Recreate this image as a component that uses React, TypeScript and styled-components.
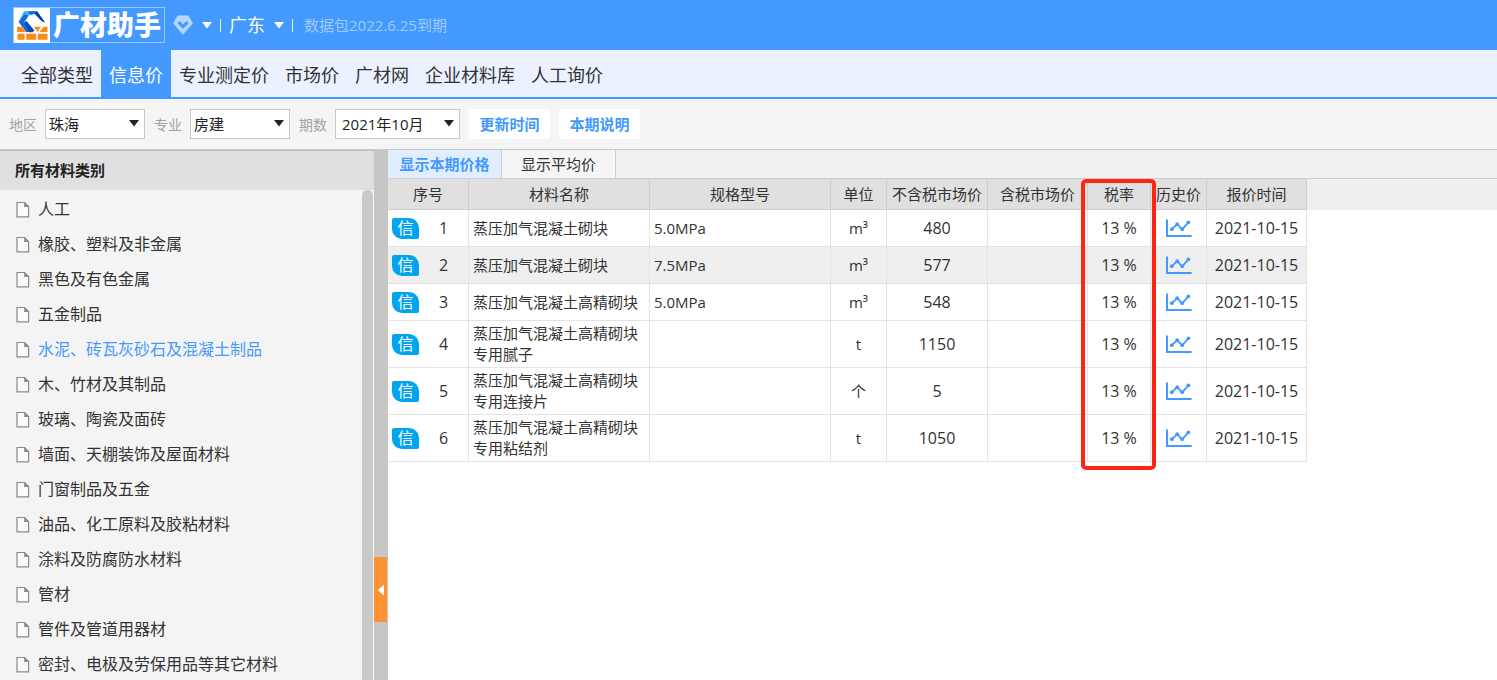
import React, { useState } from "react";
import styled, { createGlobalStyle, css } from "styled-components";

const GlobalStyle = createGlobalStyle`
  *, *::before, *::after { box-sizing: border-box; }
  body {
    margin: 0;
    background: #fff;
    color: #333;
    font-family: "Open Sans", "Noto Sans CJK SC", sans-serif;
    font-size: 15px;
    line-height: 21px;
  }
  button, select { font: inherit; color: inherit; }
`;

const Page = styled.div`
  display: flex;
  flex-direction: column;
  height: 100vh;
  overflow: hidden;
`;

const TopBar = styled.header`
  display: flex;
  align-items: center;
  flex: none;
  height: 50px;
  padding: 0 13px;
  background: #4499ff;
  color: #fff;
`;

const Brand = styled.a`
  display: flex;
  align-items: center;
  height: 36px;
  padding-right: 3px;
  border: 1px solid #9bc9ff;
  color: #fff;
  font-size: 27px;
  font-weight: 900;
  line-height: 34px;
  text-decoration: none;
`;

const BrandMark = styled.svg`
  width: 36px;
  height: 35px;
  margin-right: 3px;
  background: #fff;
`;

const BarButton = styled.button`
  display: flex;
  align-items: center;
  gap: 9px;
  margin: 0;
  padding: 0 8px;
  border: 0;
  background: none;
  color: #fff;
  font-size: 18px;
  line-height: 24px;
`;

const Divider = styled.span`
  width: 1px;
  height: 13px;
  background: #e4f0ff;
`;

const Expiry = styled.span`
  margin-left: 11px;
  color: #9fcbff;
`;

const CategoryNav = styled.nav`
  display: flex;
  flex: none;
  height: 49px;
  padding-left: 13px;
  border-bottom: 2px solid #4499ff;
  background: #ebf1ff;
`;

const CategoryLink = styled.a<{ $active?: boolean }>`
  padding: 0 8px;
  color: ${(p) => (p.$active ? "#fff" : "#333")};
  background: ${(p) => (p.$active ? "#4499ff" : "transparent")};
  font-size: 18px;
  line-height: 51px;
  text-decoration: none;
  white-space: nowrap;
`;

const FilterBar = styled.div`
  display: flex;
  align-items: center;
  flex: none;
  gap: 9px;
  height: 51px;
  padding-left: 9px;
  border-bottom: 1px solid #c8c8c8;
  background: #f5f5f5;
`;

const Field = styled.label`
  display: flex;
  align-items: center;
  gap: 8px;
  color: #a3a3a3;
  font-size: 14px;
`;

const SelectBox = styled.span<{ $wide?: boolean }>`
  position: relative;
  width: ${(p) => (p.$wide ? 125 : 100)}px;
  height: 30px;

  select {
    width: 100%;
    height: 100%;
    padding: 0 ${(p) => (p.$wide ? 6 : 3)}px;
    border: 1px solid #c8c8c8;
    border-radius: 0;
    appearance: none;
    background: #fff;
    color: #222;
    font-size: 15px;
  }

  svg {
    position: absolute;
    top: 11px;
    right: 6px;
    pointer-events: none;
  }
`;

const FilterButton = styled.button`
  width: 81px;
  height: 30px;
  padding: 0;
  border: 0;
  background: #fff;
  color: #4499ff;
  font-weight: 700;
`;

const Main = styled.main`
  display: flex;
  flex: 1;
  min-height: 0;
`;

const Sidebar = styled.aside`
  display: flex;
  flex-direction: column;
  flex: none;
  width: 374px;
  background: #f4f4f4;
`;

const SidebarTitle = styled.h2`
  flex: none;
  height: 40px;
  margin: 0;
  padding-left: 15px;
  border-top: 1px solid #c0c0c0;
  background: #e0e0e0;
  color: #222;
  font-size: 15px;
  font-weight: 700;
  line-height: 39px;
`;

const SidebarBody = styled.div`
  display: flex;
  flex: 1;
  min-height: 0;
`;

const CategoryList = styled.ul`
  flex: 1;
  margin: 0;
  padding: 2px 0 0;
  overflow: hidden;
  list-style: none;
`;

const CategoryItem = styled.a<{ $active?: boolean }>`
  display: flex;
  align-items: center;
  gap: 8px;
  height: 35px;
  padding-left: 16px;
  color: ${(p) => (p.$active ? "#4499ff" : "#333")};
  font-size: 16px;
  text-decoration: none;
`;

const ScrollThumb = styled.div`
  width: 11px;
  margin-right: 1px;
  border-radius: 6px 6px 0 0;
  background: #c9c9c9;
`;

const Splitter = styled.div`
  display: flex;
  flex-direction: column;
  justify-content: flex-end;
  flex: none;
  width: 14px;
  padding: 0 1px 58px 0;
  background: #c8c6c4;
`;

const CollapseButton = styled.button`
  display: flex;
  align-items: center;
  justify-content: center;
  height: 65px;
  padding: 0;
  border: 0;
  background: #ff9233;
`;

const Content = styled.section`
  flex: 1;
  min-width: 0;
  background: #fff;
`;

const PriceTabs = styled.div`
  display: flex;
  height: 29px;
  border-bottom: 1px solid #cfcfcf;
  background: #f1f1f1;
`;

const PriceTab = styled.button<{ $active?: boolean }>`
  width: 114px;
  padding: 0;
  border: 0;
  border-right: 1px solid #cfcfcf;
  background: #f5f5f5;
  ${(p) =>
    p.$active &&
    css`
      background: #e1eeff;
      color: #4499ff;
      font-weight: 700;
    `}
`;

const TableArea = styled.div`
  position: relative;
  background: linear-gradient(#efefef, #efefef) 0 0 / 100% 31px no-repeat;
`;

const PriceTable = styled.table`
  width: 919px;
  border-spacing: 0;
  table-layout: fixed;

  th {
    height: 31px;
    padding: 0;
    border-right: 1px solid #cdcdcd;
    border-bottom: 1px solid #cdcdcd;
    background: #e0e0e0;
    font-weight: 400;
    white-space: nowrap;
  }
`;

const Row = styled.tr<{ $highlighted?: boolean }>`
  height: 37px;
  background: ${(p) => (p.$highlighted ? "#efefef" : "#fff")};
`;

const Cell = styled.td<{ $text?: boolean }>`
  padding: 2px 4px;
  border-right: 1px solid #e3e3e3;
  border-bottom: 1px solid #e3e3e3;
  font-size: ${(p) => (p.$text ? 15 : 16)}px;
  text-align: ${(p) => (p.$text ? "left" : "center")};
  line-height: 21px;
`;

const UnitCell = styled(Cell)`
  font-size: 15px;
`;

const IndexCell = styled(Cell)`
  padding-right: 0;
`;

const IndexLine = styled.div`
  display: flex;
  align-items: center;

  span:last-child { flex: 1; }
`;

const SourceBadge = styled.span`
  width: 27px;
  height: 21px;
  border-radius: 2px 10px 2px 10px;
  background: #00a4ef;
  color: #fff;
  font-size: 16px;
  line-height: 20px;
  text-align: center;
`;

const TrendButton = styled.button`
  display: block;
  margin: 0 auto;
  padding: 0;
  border: 0;
  background: none;

  svg { display: block; }
`;

const TaxOutline = styled.div`
  position: absolute;
  top: 0;
  left: 693px;
  width: 75px;
  height: 291px;
  border: 4px solid #ff2414;
  border-radius: 5px;
  pointer-events: none;
`;

const DownArrow = ({ color = "#fff" }: { color?: string }) => (
  <svg width="10" height="7" viewBox="0 0 10 7" aria-hidden="true">
    <path d="M0 0H10L5 6.6Z" fill={color} />
  </svg>
);

const GemIcon = () => (
  <svg width="20" height="20" viewBox="0 0 20 20" aria-hidden="true">
    <path d="M4.5 0.5H15.5L19.8 8.2L10 19.8L0.2 8.2Z" fill="#b4d7ff" />
    <path d="M5.4 7.2L10 11.6L14.6 7.2" fill="none" stroke="#4499ff" strokeWidth="3" />
  </svg>
);

const LogoMark = () => (
  <BrandMark viewBox="0 0 36 35" aria-hidden="true">
    <path d="M10 3.2H22.5L19 6.5H15.5L9.5 15L4.6 14Z" fill="#27b5f5" />
    <path d="M4.6 14L10.5 6.5L14.5 7.5L10 14.2L18.5 24H12.2Z" fill="#1769d8" />
    <path d="M10 14.2L12.5 13L20.5 22.5L18.5 24.3H15Z" fill="#0f4fb5" />
    <path d="M14 3.2H23L31 14.6L27 12.6L20.6 5.8L16 7Z" fill="#1769d8" />
    <path d="M23 3.2L31 14.6L28 13.2L20.8 5.4Z" fill="#0b3e98" />
    <path d="M3 18.8H7.6L12 24H3Z M19.8 18.8H27L23.4 24Z M29.4 18.8H33.5V24H25.6Z" fill="#ff8a16" />
    <path d="M3.5 25.8H10.5V31.8H3.5Z M12.2 25.8H22V31.8H12.2Z M23.8 25.8H33.5V31.8H23.8Z" fill="#ff8a16" />
  </BrandMark>
);

const FileIcon = () => (
  <svg width="14" height="17" viewBox="0 0 14 17" aria-hidden="true">
    <path d="M1 1.5H8.6L12.6 5.5V15.8H1Z" fill="#fafafa" stroke="#8a8a8a" strokeWidth="1.2" />
    <path d="M8.2 1.2V5.9H12.9Z" fill="#8a8a8a" />
  </svg>
);

const TrendIcon = () => (
  <svg width="26" height="19" viewBox="0 0 26 19" aria-hidden="true">
    <g stroke="#4499ff" fill="none">
      <path d="M1 0.5V17H25.6" strokeWidth="2" />
      <path d="M5.6 10.4L11.2 5.3L16.2 10.4L22.4 3.4" strokeWidth="1.8" />
    </g>
    <g fill="#4499ff">
      <circle cx="5.8" cy="10.2" r="1.9" />
      <circle cx="11.2" cy="5.2" r="1.9" />
      <circle cx="16.2" cy="10.2" r="1.9" />
      <circle cx="22.4" cy="3.3" r="1.9" />
    </g>
  </svg>
);

const navItems = ["全部类型", "信息价", "专业测定价", "市场价", "广材网", "企业材料库", "人工询价"];

const filters = [
  { label: "地区", value: "珠海" },
  { label: "专业", value: "房建" },
  { label: "期数", value: "2021年10月", wide: true },
];

const categories = [
  "人工",
  "橡胶、塑料及非金属",
  "黑色及有色金属",
  "五金制品",
  "水泥、砖瓦灰砂石及混凝土制品",
  "木、竹材及其制品",
  "玻璃、陶瓷及面砖",
  "墙面、天棚装饰及屋面材料",
  "门窗制品及五金",
  "油品、化工原料及胶粘材料",
  "涂料及防腐防水材料",
  "管材",
  "管件及管道用器材",
  "密封、电极及劳保用品等其它材料",
];

const columns = [
  { title: "序号", width: 81 },
  { title: "材料名称", width: 181 },
  { title: "规格型号", width: 181 },
  { title: "单位", width: 56 },
  { title: "不含税市场价", width: 101 },
  { title: "含税市场价", width: 100 },
  { title: "税率", width: 63 },
  { title: "历史价", width: 56 },
  { title: "报价时间", width: 100 },
];

const materials = [
  { name: "蒸压加气混凝土砌块", spec: "5.0MPa", unit: "m³", price: 480 },
  { name: "蒸压加气混凝土砌块", spec: "7.5MPa", unit: "m³", price: 577 },
  { name: "蒸压加气混凝土高精砌块", spec: "5.0MPa", unit: "m³", price: 548 },
  { name: "蒸压加气混凝土高精砌块专用腻子", spec: "", unit: "t", price: 1150 },
  { name: "蒸压加气混凝土高精砌块专用连接片", spec: "", unit: "个", price: 5 },
  { name: "蒸压加气混凝土高精砌块专用粘结剂", spec: "", unit: "t", price: 1050 },
];

export default function App() {
  const [category, setCategory] = useState(4);
  const [priceTab, setPriceTab] = useState(0);

  return (
    <Page>
      <GlobalStyle />
      <TopBar>
        <Brand href="#">
          <LogoMark />
          广材助手
        </Brand>
        <BarButton aria-label="会员">
          <GemIcon />
          <DownArrow />
        </BarButton>
        <Divider />
        <BarButton>
          广东
          <DownArrow />
        </BarButton>
        <Divider />
        <Expiry>数据包2022.6.25到期</Expiry>
      </TopBar>

      <CategoryNav>
        {navItems.map((item) => (
          <CategoryLink key={item} href="#" $active={item === "信息价"}>
            {item}
          </CategoryLink>
        ))}
      </CategoryNav>

      <FilterBar>
        {filters.map((f) => (
          <Field key={f.label}>
            {f.label}
            <SelectBox $wide={f.wide}>
              <select defaultValue={f.value}>
                <option>{f.value}</option>
              </select>
              <DownArrow color="#222" />
            </SelectBox>
          </Field>
        ))}
        <FilterButton>更新时间</FilterButton>
        <FilterButton>本期说明</FilterButton>
      </FilterBar>

      <Main>
        <Sidebar>
          <SidebarTitle>所有材料类别</SidebarTitle>
          <SidebarBody>
            <CategoryList>
              {categories.map((name, i) => (
                <li key={name}>
                  <CategoryItem href="#" $active={i === category} onClick={() => setCategory(i)}>
                    <FileIcon />
                    {name}
                  </CategoryItem>
                </li>
              ))}
            </CategoryList>
            <ScrollThumb />
          </SidebarBody>
        </Sidebar>

        <Splitter>
          <CollapseButton aria-label="收起">
            <svg width="6" height="12" viewBox="0 0 6 12" aria-hidden="true">
              <path d="M6 0.5V11.5L0 6Z" fill="#fff" />
            </svg>
          </CollapseButton>
        </Splitter>

        <Content>
          <PriceTabs>
            {["显示本期价格", "显示平均价"].map((title, i) => (
              <PriceTab key={title} $active={i === priceTab} onClick={() => setPriceTab(i)}>
                {title}
              </PriceTab>
            ))}
          </PriceTabs>
          <TableArea>
            <PriceTable>
              <colgroup>
                {columns.map((c) => (
                  <col key={c.title} width={c.width} />
                ))}
              </colgroup>
              <thead>
                <tr>
                  {columns.map((c) => (
                    <th key={c.title} scope="col">
                      {c.title}
                    </th>
                  ))}
                </tr>
              </thead>
              <tbody>
                {materials.map((m, i) => (
                  <Row key={i} $highlighted={i === 1}>
                    <IndexCell>
                      <IndexLine>
                        <SourceBadge>信</SourceBadge>
                        <span>{i + 1}</span>
                      </IndexLine>
                    </IndexCell>
                    <Cell $text>{m.name}</Cell>
                    <Cell $text>{m.spec}</Cell>
                    <UnitCell>{m.unit}</UnitCell>
                    <Cell>{m.price}</Cell>
                    <Cell />
                    <Cell>13 %</Cell>
                    <Cell>
                      <TrendButton aria-label="历史价走势">
                        <TrendIcon />
                      </TrendButton>
                    </Cell>
                    <Cell>2021-10-15</Cell>
                  </Row>
                ))}
              </tbody>
            </PriceTable>
            <TaxOutline />
          </TableArea>
        </Content>
      </Main>
    </Page>
  );
}
